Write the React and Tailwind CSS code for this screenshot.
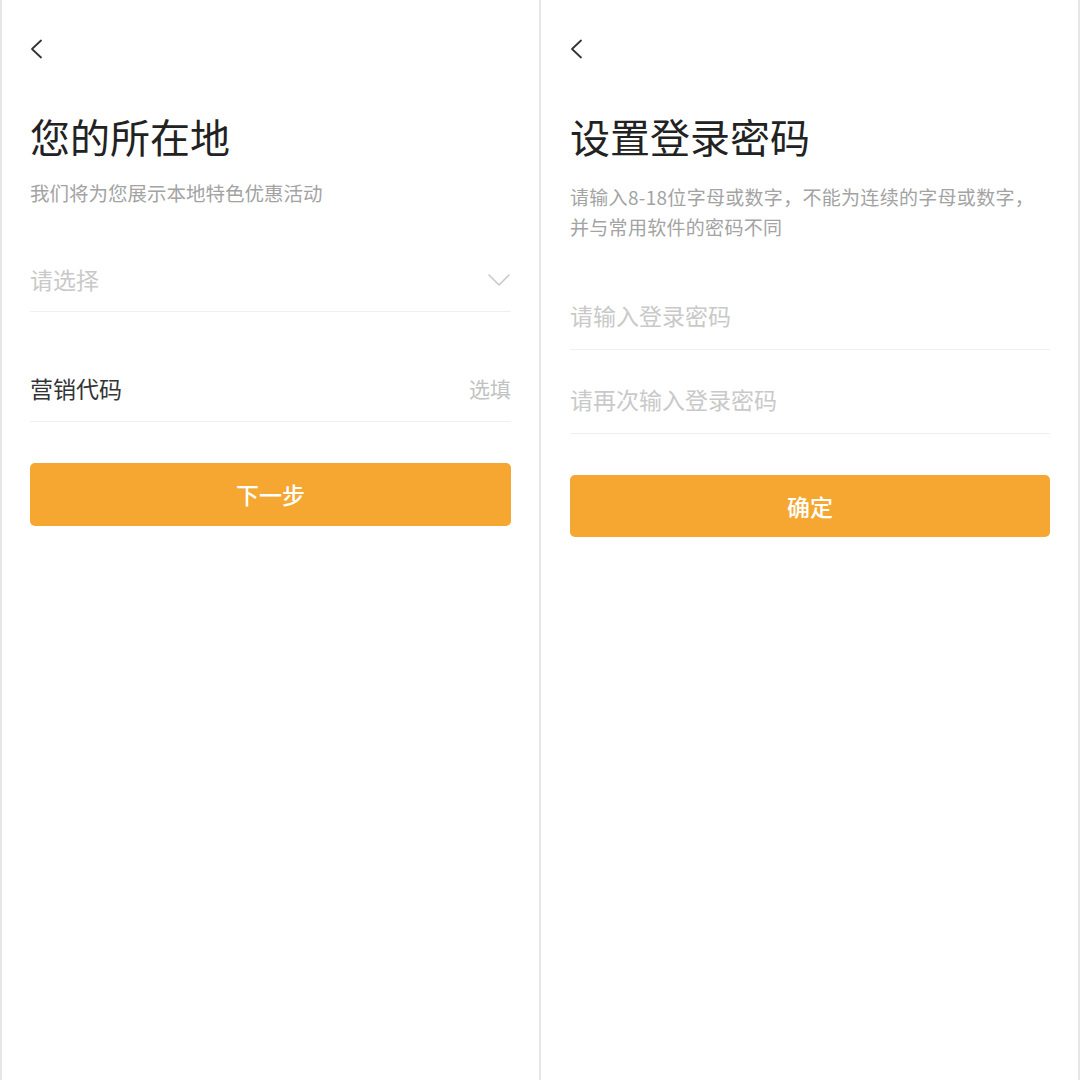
const font = { fontFamily: '"Noto Sans CJK SC", "Noto Sans", sans-serif' };

function BackIcon() {
  return (
    <svg width="14" height="20" viewBox="0 0 14 20" fill="none" stroke="#333" strokeWidth="1.8" strokeLinecap="round" strokeLinejoin="round">
      <path d="M11 1.5 L2 10 L11 18.5" />
    </svg>
  );
}

function ChevronDown() {
  return (
    <svg width="24" height="14" viewBox="0 0 24 14" fill="none" stroke="#c9c9c9" strokeWidth="1.6" strokeLinecap="round" strokeLinejoin="round">
      <path d="M2 2 L12 12 L22 2" />
    </svg>
  );
}

function LocationPage() {
  return (
    <div className="h-full border-l-2 border-r border-[#e6e6e6] px-[28px] pt-[39px]">
      <BackIcon />
      <h1 className="mt-[57px] text-[40px] leading-[40px] text-[#222]">您的所在地</h1>
      <p className="mt-[22px] text-[19.5px] leading-[30px] text-[#a3a3a3]">我们将为您展示本地特色优惠活动</p>
      <div className="mt-[20px] h-[84px] pt-[20px] flex items-center justify-between border-b border-[#f0f0f0]">
        <span className="text-[23px] text-[#c9c9c9]">请选择</span>
        <ChevronDown />
      </div>
      <div className="h-[110px] pt-[44px] flex items-center justify-between border-b border-[#f0f0f0]">
        <span className="text-[23px] text-[#333]">营销代码</span>
        <span className="text-[21px] text-[#c2c2c2]">选填</span>
      </div>
      <button className="mt-[41px] w-full h-[63px] rounded-[5px] bg-[#f5a731] text-white text-[23px] font-medium">
        下一步
      </button>
    </div>
  );
}

function PasswordPage() {
  return (
    <div className="h-full border-l border-r-2 border-[#e6e6e6] pl-[29px] pr-[28px] pt-[39px]">
      <BackIcon />
      <h1 className="mt-[57px] text-[40px] leading-[40px] text-[#222]">设置登录密码</h1>
      <p className="mt-[26px] text-[19px] leading-[30px] tracking-[0.3px] text-[#a3a3a3]">
        请输入8-18位字母或数字，不能为连续的字母或数字，<br />并与常用软件的密码不同
      </p>
      <div className="mt-[24px] h-[84px] pt-[16px] flex items-center border-b border-[#f0f0f0]">
        <span className="text-[23px] text-[#c9c9c9]">请输入登录密码</span>
      </div>
      <div className="h-[84px] pt-[16px] flex items-center border-b border-[#f0f0f0]">
        <span className="text-[23px] text-[#c9c9c9]">请再次输入登录密码</span>
      </div>
      <button className="mt-[41px] w-full h-[62px] rounded-[5px] bg-[#f5a731] text-white text-[23px] font-medium">
        确定
      </button>
    </div>
  );
}

export default function App() {
  return (
    <div className="w-[1080px] h-[1080px] bg-white grid grid-cols-2" style={font}>
      <LocationPage />
      <PasswordPage />
    </div>
  );
}
